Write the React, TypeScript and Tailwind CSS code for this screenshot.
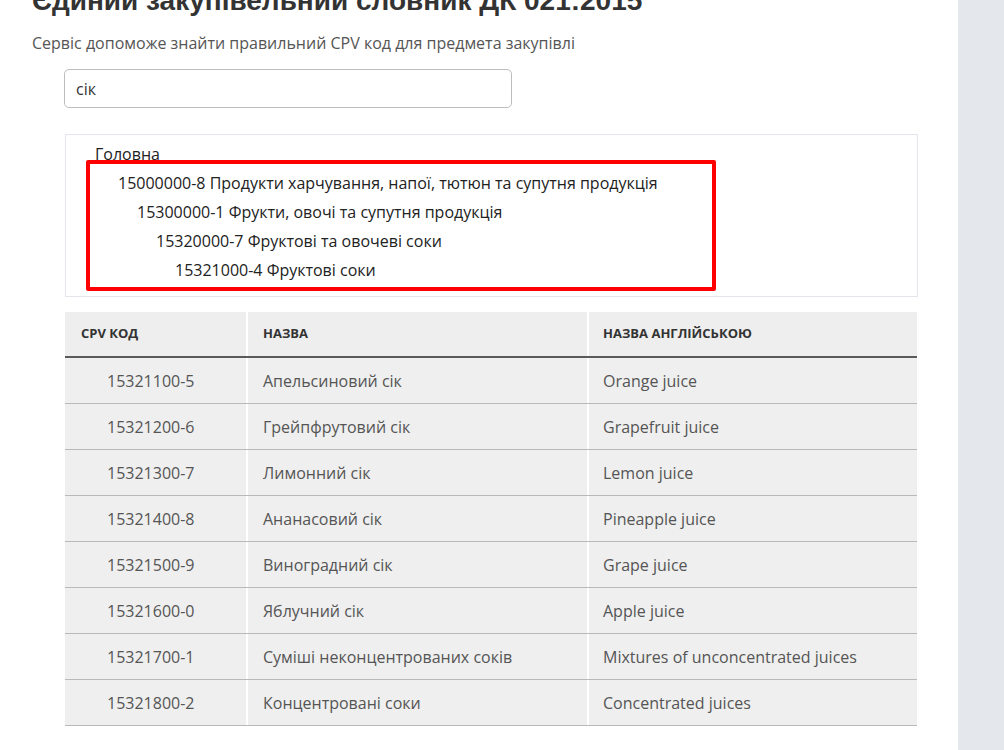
import React from "react";

const rows = [
  ["15321100-5", "Апельсиновий сік", "Orange juice"],
  ["15321200-6", "Грейпфрутовий сік", "Grapefruit juice"],
  ["15321300-7", "Лимонний сік", "Lemon juice"],
  ["15321400-8", "Ананасовий сік", "Pineapple juice"],
  ["15321500-9", "Виноградний сік", "Grape juice"],
  ["15321600-0", "Яблучний сік", "Apple juice"],
  ["15321700-1", "Суміші неконцентрованих соків", "Mixtures of unconcentrated juices"],
  ["15321800-2", "Концентровані соки", "Concentrated juices"],
];

const tree = [
  { pl: "pl-[52px]", text: "15000000-8 Продукти харчування, напої, тютюн та супутня продукція" },
  { pl: "pl-[71px]", text: "15300000-1 Фрукти, овочі та супутня продукція" },
  { pl: "pl-[90px]", text: "15320000-7 Фруктові та овочеві соки" },
  { pl: "pl-[109px]", text: "15321000-4 Фруктові соки" },
];

export default function App() {
  return (
    <div className="flex min-h-[750px] h-[750px] overflow-hidden bg-white" style={{ fontFamily: '"Open Sans", "Noto Sans", sans-serif' }}>
      <div className="w-[958px] shrink-0 pl-8 overflow-hidden">
        <h1
          className="mt-[-15px] text-[28px] leading-[32px] font-bold text-[#333]"
          style={{ fontFamily: '"Liberation Sans", Arial, sans-serif' }}
        >
          Єдиний закупівельний словник ДК 021:2015
        </h1>
        <p className="mt-[15px] text-[16px] leading-[22px] text-[#555]">
          Сервіс допоможе знайти правильний CPV код для предмета закупівлі
        </p>
        <div className="mt-[15px] ml-8 w-[448px] h-[39px] rounded-[5px] border border-[#bdbdbd] flex items-center pl-[11px] text-[16px] text-[#333]">
          сік
        </div>
        <div className="relative mt-[26px] ml-[33px] w-[853px] border border-[#e3e7eb] pt-[5px] pb-[11px] text-[16px] leading-[29px] text-[#222]">
          <div className="pl-[29px]">Головна</div>
          {tree.map((t) => (
            <div key={t.text} className={t.pl}>
              {t.text}
            </div>
          ))}
          <div className="absolute left-[20px] top-[25px] w-[630px] h-[131px] border-[4px] border-[#ff0000] rounded-[2px]" />
        </div>
        <div className="mt-[15px] ml-[33px] w-[852px]">
          <div className="grid grid-cols-[181px_341px_1fr] bg-[#eeeeee] h-[46px] border-b-2 border-[#5a5a5a] text-[13px] font-bold text-[#333]">
            <div className="flex items-center pl-4">CPV КОД</div>
            <div className="flex items-center pl-[15px] border-l-2 border-white">НАЗВА</div>
            <div className="flex items-center pl-[14px] border-l-2 border-white">НАЗВА АНГЛІЙСЬКОЮ</div>
          </div>
          {rows.map((r) => (
            <div key={r[0]} className="grid grid-cols-[181px_341px_1fr] bg-[#efefef] h-[46px] border-b border-[#b9b9b9] text-[16px] text-[#555]">
              <div className="flex items-center pl-[42px]">{r[0]}</div>
              <div className="flex items-center pl-[15px] border-l-2 border-white">{r[1]}</div>
              <div className="flex items-center pl-[14px] border-l-2 border-white">{r[2]}</div>
            </div>
          ))}
        </div>
      </div>
      <div className="flex-1 bg-[#e4e8ec]" />
    </div>
  );
}
